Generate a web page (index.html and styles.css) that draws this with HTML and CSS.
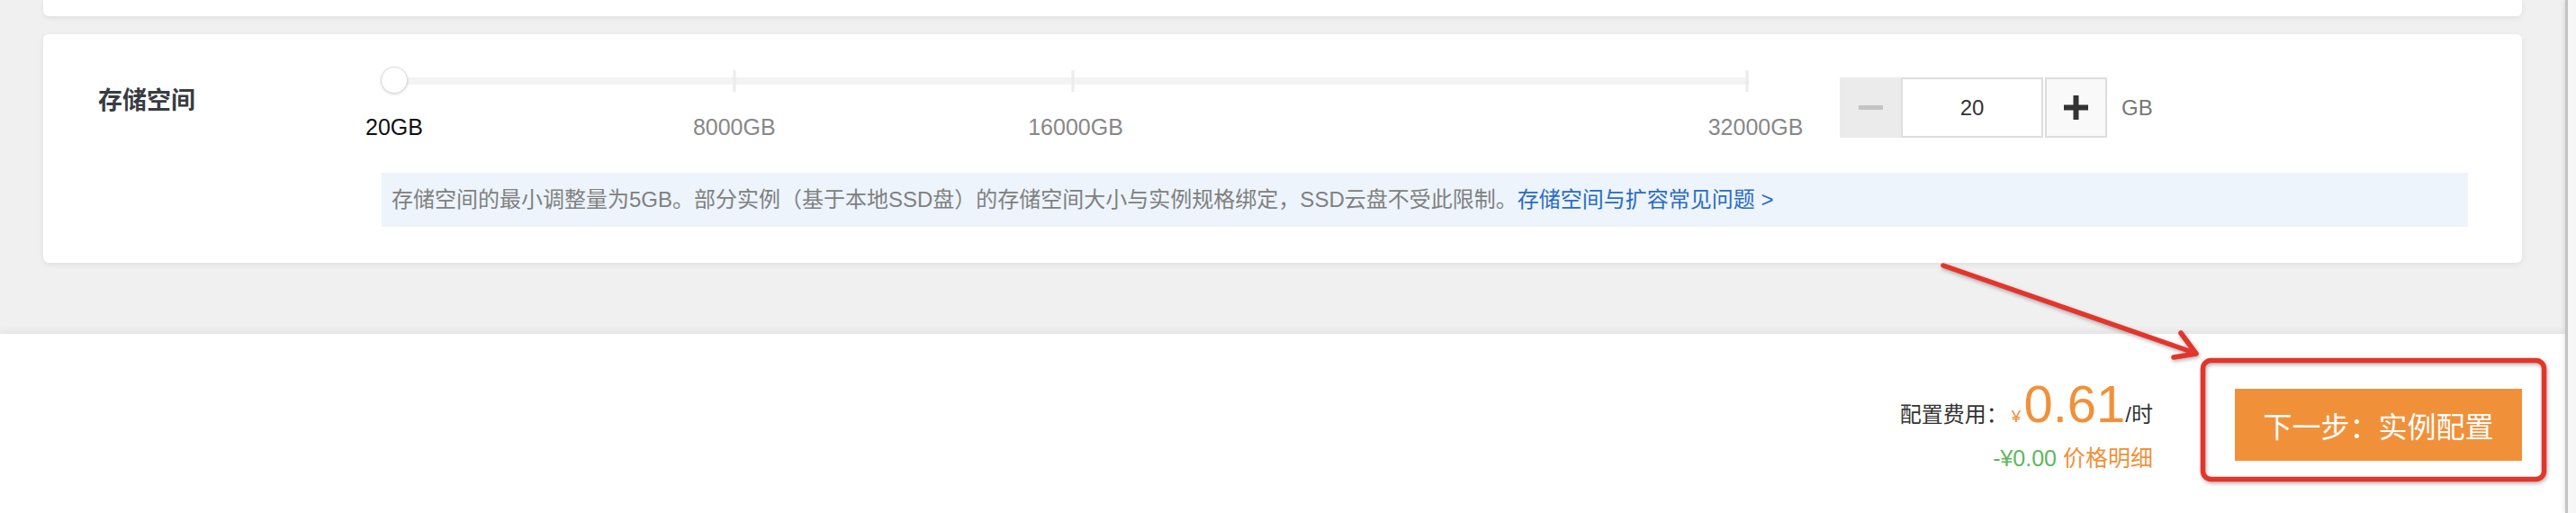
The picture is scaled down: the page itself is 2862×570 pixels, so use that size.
FILE: index.html
```html
<!DOCTYPE html>
<html lang="zh-CN">
<head>
    <meta charset="UTF-8">
    <meta name="viewport" content="width=device-width, initial-scale=1.0">
    <title>存储空间配置</title>
    <link rel="stylesheet" href="styles.css">
</head>
<body>
    <div class="page">
        <div class="content">
            <main class="main">
                <div class="card card-prev"></div>

                <section class="card storage">
                    <div class="storage-label">存储空间</div>
                    <div class="storage-body">
                        <div class="storage-row">
                            <div class="slider">
                                <div class="slider-track"></div>
                                <span class="slider-tick tick-8000"></span>
                                <span class="slider-tick tick-16000"></span>
                                <span class="slider-tick tick-32000"></span>
                                <span class="slider-knob"></span>
                                <span class="slider-mark mark-20 current">20GB</span>
                                <span class="slider-mark mark-8000">8000GB</span>
                                <span class="slider-mark mark-16000">16000GB</span>
                                <span class="slider-mark mark-32000">32000GB</span>
                            </div>

                            <div class="stepper-wrap">
                                <div class="stepper">
                                    <button class="step-btn minus" disabled>
                                        <svg width="27" height="5" viewBox="0 0 27 5"><rect width="27" height="5" fill="#c4c4c4"/></svg>
                                    </button>
                                    <input class="step-input" type="text" value="20">
                                    <button class="step-btn plus">
                                        <svg width="27" height="27" viewBox="0 0 27 27"><path d="M13.5 0v27M0 13.5h27" stroke="#333" stroke-width="6"/></svg>
                                    </button>
                                </div>
                                <span class="unit">GB</span>
                            </div>
                        </div>

                        <p class="hint">存储空间的最小调整量为5GB。部分实例（基于本地SSD盘）的存储空间大小与实例规格绑定，SSD云盘不受此限制。<a href="#">存储空间与扩容常见问题 &gt;</a></p>
                    </div>
                </section>
            </main>

            <footer class="footer">
                <div class="price">
                    <div class="price-main">配置费用：<span class="yen">¥</span><span class="amount">0.61</span>/时</div>
                    <div class="price-sub"><span class="discount">-¥0.00</span> <a href="#" class="detail">价格明细</a></div>
                </div>
                <button class="next-btn">下一步：实例配置</button>
            </footer>
        </div>
        <div class="scrollbar"></div>
    </div>

    <!-- annotation drawn over the screenshot -->
    <svg class="annotation" width="2862" height="570" viewBox="0 0 2862 570">
        <path d="M2159 295 L2438 392" />
        <path d="M2423 370 L2440 393 L2415 397" />
        <rect x="2447.5" y="400.5" width="379" height="132" rx="9" />
    </svg>
</body>
</html>
```

FILE: styles.css
```css
body {
    margin: 0;
    padding: 0;
    font-family: "Liberation Sans", "Noto Sans CJK SC", sans-serif;
    background-color: #f0f0f0;
    color: #333;
    position: relative;
    height: 570px;
    overflow: hidden;
}

.page {
    display: flex;
    height: 570px;
}

.content {
    flex: 1;
    display: flex;
    flex-direction: column;
}

.main {
    padding: 0 48px 79px;
}

.card {
    background: #fff;
    border-radius: 6px;
    box-shadow: 0 2px 6px rgba(0, 0, 0, 0.07);
}

.card-prev {
    height: 18px;
    border-radius: 0 0 6px 6px;
}

.storage {
    margin-top: 20px;
    display: flex;
    padding: 36px 60px 40px 61px;
}

.storage-label {
    width: 315px;
    flex-shrink: 0;
    margin-top: 18px;
    font-size: 27px;
    line-height: 40px;
    font-weight: bold;
    color: #373c41;
}

.storage-body {
    flex: 1;
}

.storage-row {
    display: flex;
    align-items: flex-start;
}

/* slider */
.slider {
    position: relative;
    width: 1505px;
    height: 80px;
    margin-left: 14px;
}

.slider-track {
    margin-top: 12px;
    height: 8px;
    background: #f3f3f3;
}

.slider-tick {
    position: absolute;
    top: 4px;
    width: 3px;
    height: 24px;
    background: #ececec;
    transform: translateX(-50%);
}

.tick-8000 { left: 25.1%; }
.tick-16000 { left: 50.1%; }
.tick-32000 { left: 99.9%; }

.slider-knob {
    position: absolute;
    top: 0;
    left: -15px;
    width: 28px;
    height: 28px;
    border-radius: 50%;
    background: #fff;
    border: 1px solid #dcdcdc;
    box-shadow: 0 1px 3px rgba(0, 0, 0, 0.15);
}

.slider-mark {
    position: absolute;
    top: 52px;
    font-size: 25px;
    line-height: 30px;
    color: #888;
    white-space: nowrap;
    transform: translateX(-50%);
}

.slider-mark.current { color: #111; }
.mark-20 { left: 0; }
.mark-8000 { left: 25.1%; }
.mark-16000 { left: 50.3%; }
.mark-32000 { left: 100.5%; }

/* stepper */
.stepper-wrap {
    display: flex;
    align-items: center;
    gap: 16px;
    margin-left: 101px;
    margin-top: 12px;
}

.stepper {
    display: flex;
    height: 67px;
}

.step-btn {
    width: 68px;
    height: 67px;
    padding: 0;
    display: flex;
    align-items: center;
    justify-content: center;
    cursor: pointer;
}

.step-btn.minus {
    background: #ebebeb;
    border: 2px solid #ebebeb;
}

.step-btn.plus {
    width: 69px;
    background: #f9f9f9;
    border: 2px solid #ddd;
    margin-left: 2px;
}

.step-input {
    box-sizing: border-box;
    width: 158px;
    height: 67px;
    border: 2px solid #ddd;
    text-align: center;
    font-family: inherit;
    font-size: 24px;
    color: #333;
    outline: none;
}

.unit {
    font-size: 24px;
    color: #777;
}

.hint {
    margin: 38px 0 0;
    height: 60px;
    line-height: 60px;
    padding: 0 11px;
    background: #edf4fc;
    font-size: 24px;
    color: #808080;
    white-space: nowrap;
}

.hint a {
    color: #2a6cc4;
    text-decoration: none;
}

/* footer */
.footer {
    flex: 1;
    display: flex;
    justify-content: flex-end;
    align-items: center;
    gap: 91px;
    padding: 3px 48px 0 0;
    background: #fff;
    box-shadow: 0 -3px 8px rgba(0, 0, 0, 0.06);
}

.price {
    text-align: right;
}

.price-main {
    font-size: 24px;
    line-height: 58px;
    color: #333;
}

.yen {
    font-size: 19px;
    color: #f0913a;
    margin-left: 4px;
}

.amount {
    font-size: 58px;
    color: #f0913a;
    margin-left: 3px;
}

.price-sub {
    margin-top: 2px;
    font-size: 25px;
    line-height: 30px;
}

.discount { color: #5cb85c; }

.detail {
    color: #f0913a;
    text-decoration: none;
}

.next-btn {
    width: 319px;
    height: 80px;
    border: none;
    background: #f0913a;
    color: #fff;
    font-family: inherit;
    font-size: 32px;
    cursor: pointer;
}

.scrollbar {
    width: 9px;
    background: #f6f6f6;
    border-left: 3px solid #c4c4c4;
    box-shadow: -2px 0 4px rgba(0, 0, 0, 0.08);
}

.annotation {
    position: absolute;
    top: 0;
    left: 0;
    pointer-events: none;
    filter: drop-shadow(1px 2px 2px rgba(0, 0, 0, 0.3));
}

.annotation path,
.annotation rect {
    fill: none;
    stroke: #e4352a;
    stroke-width: 5.5;
    stroke-linecap: round;
    stroke-linejoin: round;
}
```
